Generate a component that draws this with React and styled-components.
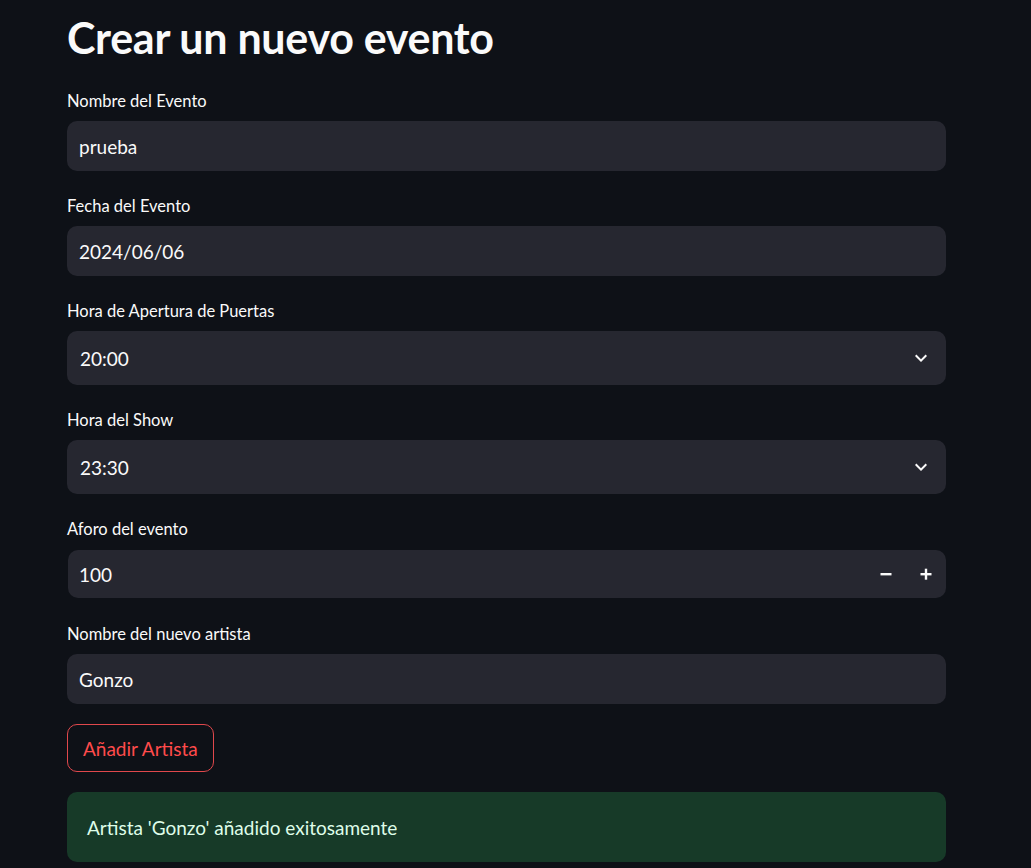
import React from 'react';
import styled, { createGlobalStyle } from 'styled-components';

const GlobalStyle = createGlobalStyle`
    html, body {
        margin: 0;
        padding: 0;
        background: #0e1117;
    }
    body {
        font-family: "Lato", "Noto Sans", sans-serif;
        color: #fafafa;
    }
`;

const ChevronIcon = () => (
    <svg width="24" height="24" viewBox="0 0 24 24" fill="#fafafa">
        <path d="M7.41 8.59L12 13.17l4.59-4.58L18 10l-6 6-6-6 1.41-1.41z" />
    </svg>
);

const MinusIcon = () => (
    <svg width="14" height="14" viewBox="0 0 14 14">
        <rect x="1.5" y="6" width="11" height="2.4" fill="#fafafa" />
    </svg>
);

const PlusIcon = () => (
    <svg width="14" height="14" viewBox="0 0 14 14" fill="#fafafa">
        <rect x="1.5" y="6" width="11" height="2.4" />
        <rect x="5.8" y="1.7" width="2.4" height="11" />
    </svg>
);

const fields = [
    { label: 'Nombre del Evento', value: 'prueba', kind: 'text' },
    { label: 'Fecha del Evento', value: '2024/06/06', kind: 'text' },
    { label: 'Hora de Apertura de Puertas', value: '20:00', kind: 'select' },
    { label: 'Hora del Show', value: '23:30', kind: 'select' },
    { label: 'Aforo del evento', value: '100', kind: 'number' },
    { label: 'Nombre del nuevo artista', value: 'Gonzo', kind: 'text' },
];

const Field = ({ label, value, kind }) => (
    <FieldStyled>
        <Label>{label}</Label>
        {kind === 'text' && <TextBox>{value}</TextBox>}
        {kind === 'select' && (
            <SelectBox>
                <span>{value}</span>
                <ChevronIcon />
            </SelectBox>
        )}
        {kind === 'number' && (
            <NumberBox>
                <span className="value">{value}</span>
                <StepButton><MinusIcon /></StepButton>
                <StepButton><PlusIcon /></StepButton>
            </NumberBox>
        )}
    </FieldStyled>
);

const App = () => {
    return (
        <>
            <GlobalStyle />
            <Page>
                <Title>Crear un nuevo evento</Title>
                {fields.map((f) => (
                    <Field key={f.label} {...f} />
                ))}
                <OutlineButton>Añadir Artista</OutlineButton>
                <SuccessAlert>Artista 'Gonzo' añadido exitosamente</SuccessAlert>
            </Page>
        </>
    );
};

const Page = styled.main`
    width: 879px;
    margin-left: 67px;
    padding-top: 6px;
    display: flex;
    flex-direction: column;
    align-items: flex-start;
    gap: 20px;
`;

const Title = styled.h1`
    margin: 0;
    height: 60px;
    font-size: 43px;
    font-weight: 700;
    line-height: 64px;
    letter-spacing: -0.3px;
    color: #fafafa;
`;

const FieldStyled = styled.div`
    width: 100%;
    display: flex;
    flex-direction: column;
`;

const Label = styled.label`
    height: 30px;
    margin-bottom: 5px;
    display: flex;
    align-items: center;
    padding-bottom: 1px;
    box-sizing: border-box;
    font-size: 16.5px;
    color: #fafafa;
`;

const TextBox = styled.div`
    height: 50px;
    box-sizing: border-box;
    display: flex;
    align-items: center;
    padding: 0 12px;
    background: #262730;
    border-radius: 10px;
    font-size: 19px;
    color: #fafafa;
`;

const SelectBox = styled(TextBox)`
    height: 54px;
    justify-content: space-between;
    padding: 0 13px 0 13px;
`;

const NumberBox = styled.div`
    height: 48px;
    margin: 1px 0 1px 1px;
    display: flex;
    align-items: center;
    background: #262730;
    border-radius: 10px;
    font-size: 19px;
    .value {
        flex: 1;
        padding-left: 11px;
    }
`;

const StepButton = styled.div`
    width: 40px;
    height: 100%;
    display: flex;
    align-items: center;
    justify-content: center;
`;

const OutlineButton = styled.button`
    height: 48px;
    box-sizing: border-box;
    padding: 0 15px;
    background: transparent;
    border: 1px solid #e0484c;
    border-radius: 10px;
    font-family: inherit;
    font-size: 19px;
    color: #ff4b4b;
`;

const SuccessAlert = styled.div`
    width: 100%;
    height: 70px;
    box-sizing: border-box;
    padding: 0 20px;
    display: flex;
    align-items: center;
    background: #173a28;
    border-radius: 10px;
    font-size: 19px;
    color: #dffde9;
`;

export default App;
